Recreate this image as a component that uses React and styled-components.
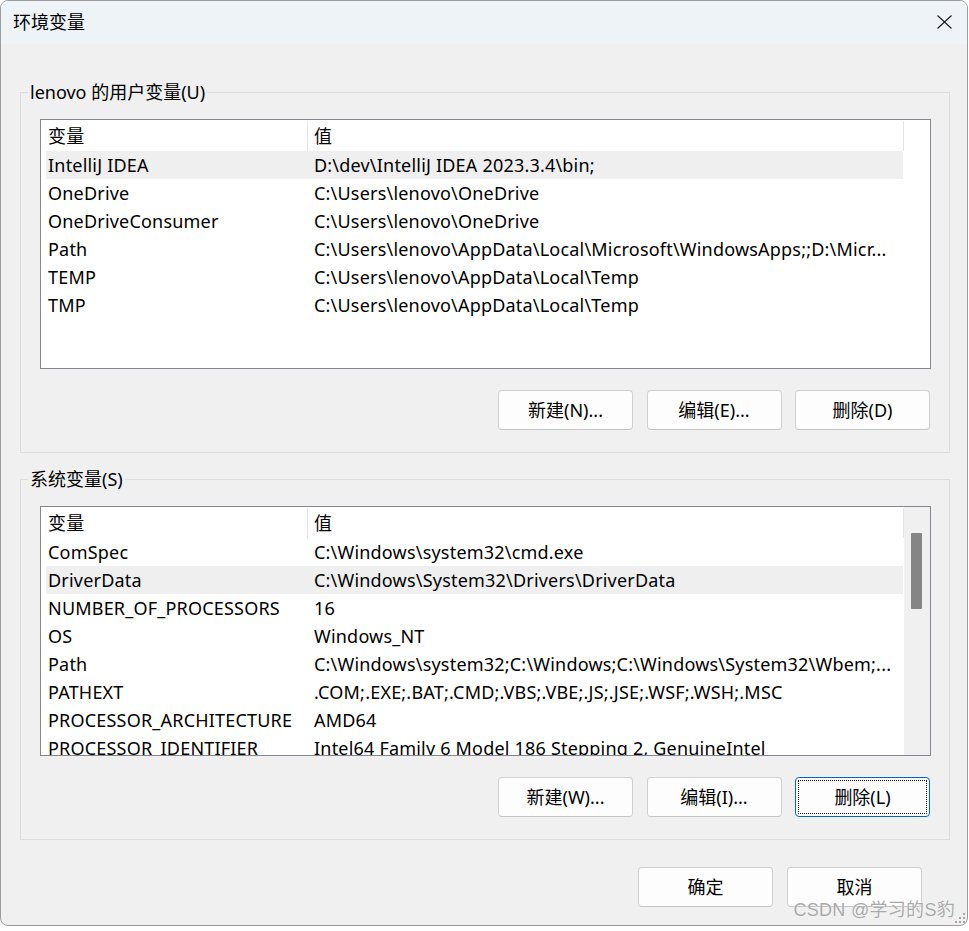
import React from "react";
import styled, { createGlobalStyle } from "styled-components";

const Global = createGlobalStyle`
  html, body { margin: 0; padding: 0; background: #ffffff; }
  body { font-family: "Noto Sans", "Noto Sans CJK SC", sans-serif; }
  * { box-sizing: border-box; }
`;

const FONT = `"Noto Sans", "Noto Sans CJK SC", sans-serif`;

const Window = styled.div`
  position: relative;
  width: 968px;
  height: 926px;
  border: 1px solid #9c9c9c;
  border-radius: 8px;
  overflow: hidden;
  background: #f0f0f0;
  display: flex;
  flex-direction: column;
  font-family: ${FONT};
  font-size: 18px;
  letter-spacing: 0.2px;
  color: #000;
`;

const TitleBar = styled.div`
  height: 43px;
  flex: none;
  background: #eef3f8;
  display: flex;
  align-items: center;
  justify-content: space-between;
  padding: 0 15px 0 12px;
`;

const Title = styled.div`
  font-size: 18px;
  letter-spacing: 0;
  line-height: 24px;
  margin-top: -1px;
`;

const CloseIcon = styled.svg`
  display: block;
  width: 15px;
  height: 14px;
  margin-top: -1px;
`;

const Body = styled.div`
  display: flex;
  flex-direction: column;
  padding: 36px 17px 0 19px;
  gap: 14px;
`;

const GroupBox = styled.fieldset`
  margin: 0;
  padding: 0;
  min-width: 0;
  width: 930px;
  border: 1px solid #dcdcdc;
`;

const Legend = styled.legend`
  margin-left: 7px;
  padding: 0 2px;
  line-height: 24px;
  letter-spacing: 0;
`;

const GroupInner = styled.div`
  display: flex;
  flex-direction: column;
  gap: 21px;
  padding: 15px 18px 22px 19px;
`;

const ListBox = styled.div`
  height: 250px;
  border: 1px solid #828790;
  background: #fff;
  display: flex;
  overflow: hidden;
`;

const ListContent = styled.div`
  width: 863px;
  flex: none;
  display: flex;
  flex-direction: column;
`;

const Header = styled.div`
  display: grid;
  grid-template-columns: 267px 596px;
  height: 31px;
  flex: none;
`;

const HeaderCell = styled.div`
  display: flex;
  align-items: center;
  padding-left: ${(p) => (p.$first ? 7 : 6)}px;
  border-right: 1px solid #e5e5e5;
  margin-top: 1px;
  line-height: 28px;
`;

const Row = styled.div`
  display: grid;
  grid-template-columns: 268px 1fr;
  height: 28px;
  flex: none;
  margin-left: 5px;
  width: 857px;
  align-items: center;
  background: ${(p) => (p.$selected ? "#efefef" : "transparent")};
  white-space: nowrap;
`;

const Cell = styled.div`
  overflow: hidden;
  padding-left: ${(p) => (p.$first ? 2 : 0)}px;
  line-height: 28px;
`;

const Scrollbar = styled.div`
  flex: 1;
  background: #f0f0f0;
  padding: 26px 8px 0 7px;
`;

const Thumb = styled.div`
  height: 76px;
  background: #858585;
  border-radius: 1px;
`;

const ButtonRow = styled.div`
  display: flex;
  justify-content: flex-end;
  gap: ${(p) => p.$gap || 13}px;
  padding-right: ${(p) => p.$pr || 0}px;
`;

const Button = styled.div`
  position: relative;
  width: 135px;
  height: 40px;
  border: 1px solid ${(p) => (p.$focused ? "#0067c0" : "#d0d0d0")};
  border-bottom-color: ${(p) => (p.$focused ? "#0067c0" : "#c4c4c4")};
  border-radius: 4px;
  background: #fdfdfd;
  display: flex;
  align-items: center;
  justify-content: center;
  line-height: 24px;
  letter-spacing: 0;
  ${(p) =>
    p.$focused &&
    `&::after {
      content: "";
      position: absolute;
      inset: 2px;
      border: 1px dotted #000;
      border-radius: 1px;
    }`}
`;

const Footer = styled.div`
  padding-top: 27px;
`;

const Watermark = styled.div`
  position: absolute;
  right: 12px;
  bottom: 3px;
  font-family: "Liberation Sans", "Noto Sans CJK SC", sans-serif;
  font-size: 18px;
  line-height: 24px;
  color: rgba(140, 140, 140, 0.75);
  text-shadow: 0 0 1px #fff;
  letter-spacing: 0.3px;
`;

const Grip = styled.svg`
  position: absolute;
  right: 1px;
  bottom: 1px;
  width: 12px;
  height: 12px;
`;

const userVars = [
  ["IntelliJ IDEA", "D:\\dev\\IntelliJ IDEA 2023.3.4\\bin;"],
  ["OneDrive", "C:\\Users\\lenovo\\OneDrive"],
  ["OneDriveConsumer", "C:\\Users\\lenovo\\OneDrive"],
  ["Path", "C:\\Users\\lenovo\\AppData\\Local\\Microsoft\\WindowsApps;;D:\\Micr..."],
  ["TEMP", "C:\\Users\\lenovo\\AppData\\Local\\Temp"],
  ["TMP", "C:\\Users\\lenovo\\AppData\\Local\\Temp"],
];

const sysVars = [
  ["ComSpec", "C:\\Windows\\system32\\cmd.exe"],
  ["DriverData", "C:\\Windows\\System32\\Drivers\\DriverData"],
  ["NUMBER_OF_PROCESSORS", "16"],
  ["OS", "Windows_NT"],
  ["Path", "C:\\Windows\\system32;C:\\Windows;C:\\Windows\\System32\\Wbem;..."],
  ["PATHEXT", ".COM;.EXE;.BAT;.CMD;.VBS;.VBE;.JS;.JSE;.WSF;.WSH;.MSC"],
  ["PROCESSOR_ARCHITECTURE", "AMD64"],
  ["PROCESSOR_IDENTIFIER", "Intel64 Family 6 Model 186 Stepping 2, GenuineIntel"],
];

function VarList({ rows, selected, scroll }) {
  return (
    <ListBox>
      <ListContent>
        <Header>
          <HeaderCell $first>变量</HeaderCell>
          <HeaderCell>值</HeaderCell>
        </Header>
        {rows.map(([k, v], i) => (
          <Row key={k + i} $selected={i === selected}>
            <Cell $first>{k}</Cell>
            <Cell>{v}</Cell>
          </Row>
        ))}
      </ListContent>
      {scroll && (
        <Scrollbar>
          <Thumb />
        </Scrollbar>
      )}
    </ListBox>
  );
}

export default function App() {
  return (
    <>
      <Global />
      <Window>
        <TitleBar>
          <Title>环境变量</Title>
          <CloseIcon viewBox="0 0 15 14">
            <path d="M0.5 0.5 L14.5 13.5 M14.5 0.5 L0.5 13.5" stroke="#1a1a1a" strokeWidth="1.1" fill="none" />
          </CloseIcon>
        </TitleBar>
        <Body>
          <GroupBox>
            <Legend>lenovo 的用户变量(U)</Legend>
            <GroupInner>
              <VarList rows={userVars} selected={0} />
              <ButtonRow $gap={13.5} $pr={1}>
                <Button>新建(N)...</Button>
                <Button>编辑(E)...</Button>
                <Button>删除(D)</Button>
              </ButtonRow>
            </GroupInner>
          </GroupBox>
          <GroupBox>
            <Legend>系统变量(S)</Legend>
            <GroupInner>
              <VarList rows={sysVars} selected={1} scroll />
              <ButtonRow $gap={13.5} $pr={1}>
                <Button>新建(W)...</Button>
                <Button>编辑(I)...</Button>
                <Button $focused>删除(L)</Button>
              </ButtonRow>
            </GroupInner>
          </GroupBox>
        </Body>
        <Footer>
          <ButtonRow $gap={14} $pr={45}>
            <Button>确定</Button>
            <Button>取消</Button>
          </ButtonRow>
        </Footer>
        <Watermark>CSDN @学习的S豹</Watermark>
        <Grip viewBox="0 0 12 12">
          <rect x="9" y="1" width="2" height="2" fill="#a8a8a8" />
          <rect x="5" y="5" width="2" height="2" fill="#a8a8a8" />
          <rect x="9" y="5" width="2" height="2" fill="#a8a8a8" />
          <rect x="1" y="9" width="2" height="2" fill="#a8a8a8" />
          <rect x="5" y="9" width="2" height="2" fill="#a8a8a8" />
          <rect x="9" y="9" width="2" height="2" fill="#a8a8a8" />
        </Grip>
      </Window>
    </>
  );
}
